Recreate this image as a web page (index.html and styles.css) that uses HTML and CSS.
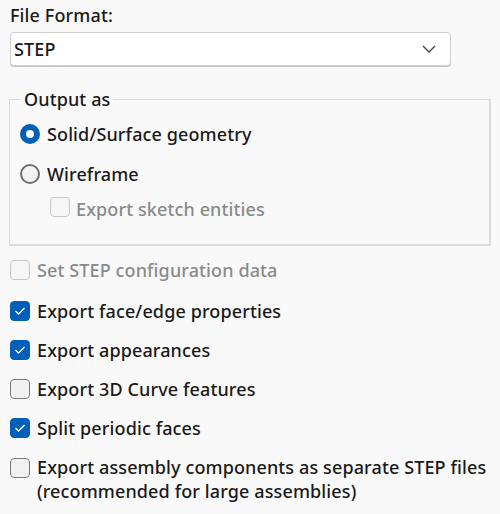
FILE: index.html
```html
<!DOCTYPE html>
<html lang="en">
  <head>
    <meta charset="UTF-8" />
    <title>Export Options</title>
    <link rel="stylesheet" href="styles.css">
  </head>
  <body>
    <div class="panel">
      <label class="caption" for="format">File Format:</label>
      <div class="select" id="format">
        <span>STEP</span>
        <svg class="chevron" width="14" height="8" viewBox="0 0 14 8">
          <path d="M1 1 L7 7 L13 1" fill="none" stroke="#444" stroke-width="1.4" />
        </svg>
      </div>

      <fieldset class="group">
        <legend>Output as</legend>
        <div class="option">
          <span class="radio checked"></span>
          <span>Solid/Surface geometry</span>
        </div>
        <div class="option">
          <span class="radio"></span>
          <span>Wireframe</span>
        </div>
        <div class="option sub disabled">
          <span class="check"></span>
          <span>Export sketch entities</span>
        </div>
      </fieldset>

      <div class="options">
        <div class="option first disabled">
          <span class="check"></span>
          <span>Set STEP configuration data</span>
        </div>
        <div class="option">
          <span class="check on"><svg width="12" height="10" viewBox="0 0 12 10"><path d="M1.5 5 L4.5 8 L10.5 2" fill="none" stroke="#fff" stroke-width="1.3" /></svg></span>
          <span>Export face/edge properties</span>
        </div>
        <div class="option">
          <span class="check on"><svg width="12" height="10" viewBox="0 0 12 10"><path d="M1.5 5 L4.5 8 L10.5 2" fill="none" stroke="#fff" stroke-width="1.3" /></svg></span>
          <span>Export appearances</span>
        </div>
        <div class="option">
          <span class="check"></span>
          <span>Export 3D Curve features</span>
        </div>
        <div class="option">
          <span class="check on"><svg width="12" height="10" viewBox="0 0 12 10"><path d="M1.5 5 L4.5 8 L10.5 2" fill="none" stroke="#fff" stroke-width="1.3" /></svg></span>
          <span>Split periodic faces</span>
        </div>
        <div class="option multi">
          <span class="check"></span>
          <span>Export assembly components as separate STEP files<br />(recommended for large assemblies)</span>
        </div>
      </div>
    </div>
  </body>
</html>
```

FILE: styles.css
```css
html {
  background: #f9f9f9;
}

body {
  margin: 0;
  font-family: "Noto Sans", "Open Sans", sans-serif;
  font-size: 18px;
  font-weight: 500;
  letter-spacing: 0.12px;
  color: #1a1a1a;
}

.panel {
  display: flex;
  flex-direction: column;
  padding: 3px 9px 0 10px;
}

.caption {
  line-height: 24px;
}

.select {
  display: flex;
  align-items: center;
  justify-content: space-between;
  width: 441px;
  height: 34px;
  margin-top: 5px;
  padding: 0 14px 0 3px;
  box-sizing: border-box;
  background: #ffffff;
  border: 1px solid #d0d0d0;
  border-radius: 4px;
  box-shadow: 0 1px 0 #c4c4c4;
}

.group {
  margin: 22px 0 0 -1px;
  padding: 4px 0 0 10px;
  width: 482px;
  height: 158px;
  box-sizing: border-box;
  border: 1px solid #dcdcdc;
  border-width: 1px 2px 2px 1px;
}

.group legend {
  padding: 0 3px;
  margin-left: 1px;
  line-height: 22px;
}

.option {
  display: flex;
  align-items: center;
  gap: 7px;
  height: 39px;
}

.group .option {
  height: 40px;
}

.group .option.sub {
  height: 32px;
  padding-left: 30px;
  gap: 6px;
  padding-top: 3px;
  align-items: flex-start;
}

.options {
  display: flex;
  flex-direction: column;
  margin-top: 4px;
}

.option.first {
  margin-bottom: 2px;
}

.option.multi {
  height: auto;
  align-items: flex-start;
  line-height: 24px;
  margin-top: 8px;
}

.option.multi .check {
  margin-top: 3px;
}

.disabled {
  color: #8a8a8a;
}

.radio {
  width: 16px;
  height: 16px;
  border: 2px solid #6f6f6f;
  border-radius: 50%;
  background: #f4f4f4;
  flex: none;
}

.radio.checked {
  width: 8px;
  height: 8px;
  border: 6px solid #005fb8;
  background: #ffffff;
}

.check {
  display: flex;
  align-items: center;
  justify-content: center;
  width: 18px;
  height: 18px;
  border: 1px solid #7a7a7a;
  border-radius: 4px;
  background: #f1f1f1;
  flex: none;
}

.disabled .check {
  border-color: #c8c8c8;
  background: #f6f6f6;
}

.check.on {
  border-color: #005fb8;
  background: #005fb8;
}
```
